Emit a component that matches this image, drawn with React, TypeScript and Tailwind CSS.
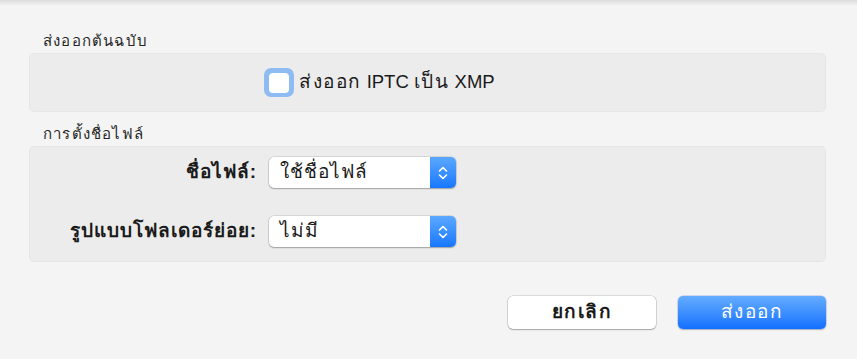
import React from "react";

function Stepper() {
  return (
    <div className="flex h-full w-[26px] items-center justify-center rounded-r-[5px] bg-gradient-to-b from-[#5aa8ff] to-[#1677ff]">
      <svg width="10" height="16" viewBox="0 0 10 16" fill="none">
        <path d="M1.5 6 L5 2.5 L8.5 6" stroke="white" strokeWidth="1.6" strokeLinecap="round" strokeLinejoin="round" />
        <path d="M1.5 10 L5 13.5 L8.5 10" stroke="white" strokeWidth="1.6" strokeLinecap="round" strokeLinejoin="round" />
      </svg>
    </div>
  );
}

function Popup({ value }: { value: string }) {
  return (
    <div className="flex h-[31px] w-[187px] items-center rounded-[5px] bg-white shadow-[0_0_0_0.5px_rgba(0,0,0,0.18),0_1px_1.5px_rgba(0,0,0,0.25)]">
      <span className="flex-1 pl-[11px] text-[19px] tracking-[1px] text-[#1a1a1a]">{value}</span>
      <Stepper />
    </div>
  );
}

export default function App() {
  return (
    <div
      className="relative h-[359px] w-[857px] bg-[#f4f4f4] pl-[29px] pr-[31px] pt-[31px] text-[#222]"
      style={{ fontFamily: '"Liberation Sans", "Noto Sans", sans-serif' }}
    >
      <div className="absolute inset-x-0 top-0 h-[6px] bg-gradient-to-b from-[#dcdcdc] to-[#f4f4f4]" />

      <div className="pl-[14px] text-[15px] leading-[20px] tracking-[1.2px] text-[#262626]">ส่งออกต้นฉบับ</div>
      <div className="mt-[2px] flex h-[59px] items-center rounded-[5px] bg-[#ececec] pl-[235px] shadow-[inset_0_0_0_1px_rgba(0,0,0,0.025)]">
        <div className="flex h-[29px] w-[30px] items-center justify-center rounded-[7px] bg-[#8ebcf2]">
          <div className="h-[20px] w-[20px] rounded-[4px] bg-white" />
        </div>
        <span className="ml-[5px] text-[18.5px] text-[#1a1a1a]">
          <span className="text-[19px] tracking-[1.5px]">ส่งออก</span> IPTC{" "}
          <span className="text-[19px] tracking-[1.5px]">เป็น</span> XMP
        </span>
      </div>

      <div className="mt-[12px] pl-[14px] text-[15px] leading-[20px] tracking-[1.2px] text-[#262626]">การตั้งชื่อไฟล์</div>
      <div className="mt-[2px] flex h-[116px] flex-col gap-[28px] rounded-[5px] bg-[#ececec] pt-[11px] shadow-[inset_0_0_0_1px_rgba(0,0,0,0.025)]">
        <div className="flex items-center">
          <span className="w-[228px] text-right text-[19px] font-bold tracking-[1px] text-[#1a1a1a]">ชื่อไฟล์:</span>
          <div className="ml-[12px]">
            <Popup value="ใช้ชื่อไฟล์" />
          </div>
        </div>
        <div className="flex items-center">
          <span className="w-[228px] text-right text-[19px] font-bold tracking-[1px] text-[#1a1a1a]">รูปแบบโฟลเดอร์ย่อย:</span>
          <div className="ml-[12px]">
            <Popup value="ไม่มี" />
          </div>
        </div>
      </div>

      <div className="mt-[34px] flex justify-end gap-[22px]">
        <button className="flex h-[33px] w-[148px] items-center justify-center rounded-[5px] bg-white text-[19px] font-bold tracking-[1.5px] text-[#1a1a1a] shadow-[0_0_0_0.5px_rgba(0,0,0,0.2),0_1px_1.5px_rgba(0,0,0,0.25)]">
          ยกเลิก
        </button>
        <button className="flex h-[33px] w-[148px] items-center justify-center rounded-[5px] bg-gradient-to-b from-[#64acff] to-[#0f70ff] text-[19px] tracking-[1.5px] text-white shadow-[0_0_0_0.5px_rgba(0,60,200,0.3),0_1px_1.5px_rgba(0,0,0,0.2)]">
          ส่งออก
        </button>
      </div>
    </div>
  );
}
